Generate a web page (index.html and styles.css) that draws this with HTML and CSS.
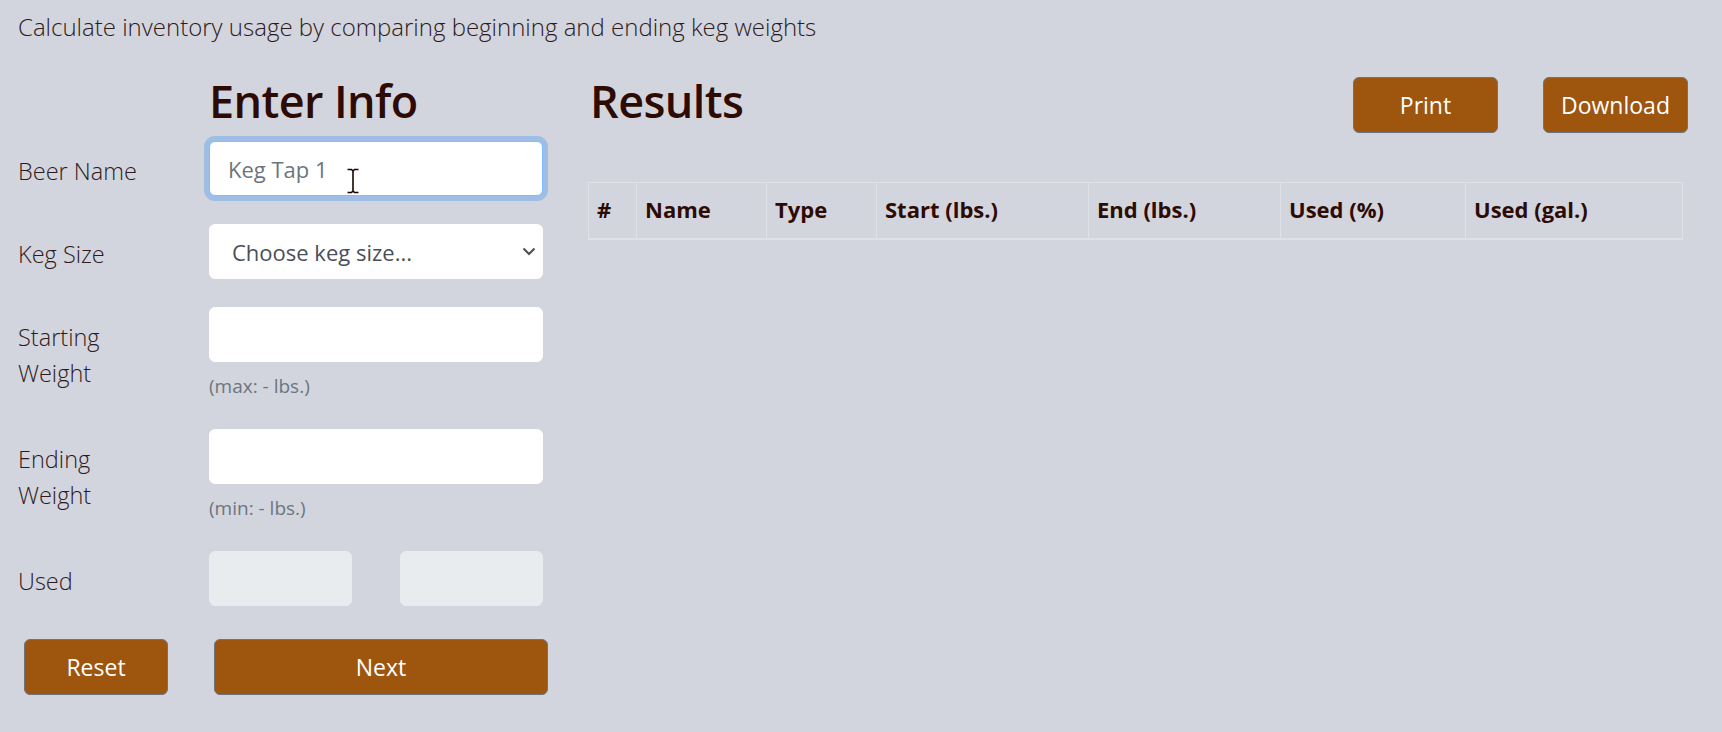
FILE: index.html
```html
<!DOCTYPE html>
<html lang="en">
<head>
<meta charset="utf-8">
<title>Keg Inventory Calculator</title>
<link rel="stylesheet" href="styles.css">
</head>
<body>
<div class="page">
  <p class="lead">Calculate inventory usage by comparing beginning and ending keg weights</p>
  <div class="main">
    <section class="entry">
      <div class="form-grid">
        <h2 class="title entry-title">Enter Info</h2>

        <label class="lbl">Beer Name</label>
        <div class="field overlay-host">
          <input class="ctrl focused" type="text" placeholder="Keg Tap 1">
          <svg class="ibeam" width="14" height="26" viewBox="0 0 14 26">
            <path d="M1.5 1.5h4l1.5 1.5 1.5-1.5h4M7 3v20M1.5 24.5h4l1.5-1.5 1.5 1.5h4" fill="none" stroke="#1a0600" stroke-width="1.6"/>
          </svg>
        </div>

        <label class="lbl">Keg Size</label>
        <div class="field overlay-host">
          <select class="ctrl sel"><option>Choose keg size...</option></select>
          <svg class="chev" width="14" height="9" viewBox="0 0 14 9">
            <path d="M1.5 1.5l5.5 5.5 5.5-5.5" fill="none" stroke="#495057" stroke-width="2"/>
          </svg>
        </div>

        <label class="lbl">Starting Weight</label>
        <div class="field">
          <input class="ctrl" type="text">
          <small class="hint">(max: - lbs.)</small>
        </div>

        <label class="lbl">Ending Weight</label>
        <div class="field">
          <input class="ctrl" type="text">
          <small class="hint">(min: - lbs.)</small>
        </div>

        <label class="lbl">Used</label>
        <div class="field used">
          <input class="ctrl" type="text" disabled>
          <input class="ctrl" type="text" disabled>
        </div>
      </div>
      <div class="actions">
        <button class="btn reset">Reset</button>
        <button class="btn next">Next</button>
      </div>
    </section>

    <section class="results">
      <div class="results-head">
        <h2 class="title">Results</h2>
        <div class="tools">
          <button class="btn tool">Print</button>
          <button class="btn tool">Download</button>
        </div>
      </div>
      <table class="grid">
        <thead>
          <tr>
            <th class="c-num">#</th>
            <th class="c-name">Name</th>
            <th class="c-type">Type</th>
            <th class="c-start">Start (lbs.)</th>
            <th class="c-end">End (lbs.)</th>
            <th class="c-pct">Used (%)</th>
            <th class="c-gal">Used (gal.)</th>
          </tr>
        </thead>
        <tbody></tbody>
      </table>
    </section>
  </div>
</div>
</body>
</html>
```

FILE: styles.css
```css
* {
  box-sizing: border-box;
}

html, body {
  margin: 0;
  padding: 0;
}

body {
  background: #d3d5de;
  color: #2e0b02;
  font-family: "Open Sans", "Noto Sans", sans-serif;
  font-size: 23px;
  line-height: 36px;
}

.page {
  padding: 9px 34px 0 18px;
}

.lead {
  margin: 0;
  font-size: 24px;
  font-weight: 300;
  line-height: 36px;
  color: #2e1a1a;
}

.main {
  display: flex;
  margin-top: 27px;
}

.entry {
  width: 531px;
  flex: none;
}

.title {
  margin: 0;
  font-size: 45px;
  font-weight: 600;
  letter-spacing: -0.6px;
  line-height: 58px;
  color: #2e0b02;
}

.form-grid {
  display: grid;
  grid-template-columns: 191px 334px;
  align-items: start;
}

.entry-title {
  grid-column: 2;
  margin-bottom: 11px;
}

.lbl {
  grid-column: 1;
  padding: 12px 58px 0 0;
  font-size: 23.5px;
  font-weight: 300;
  line-height: 36px;
  color: #2e1a1a;
}

.field {
  grid-column: 2;
  margin-bottom: 28px;
  display: flex;
  flex-direction: column;
}

.overlay-host {
  position: relative;
}

.ctrl {
  display: block;
  width: 100%;
  height: 55px;
  margin: 0;
  padding: 0 18px;
  border: 1px solid #ffffff;
  border-radius: 6px;
  background: #ffffff;
  font-family: "Open Sans", "Noto Sans", sans-serif;
  font-size: 22px;
  color: #495057;
  outline: none;
}

.ctrl::placeholder {
  color: #6c757d;
}

.focused {
  border-color: #80bdff;
  box-shadow: 0 0 0 5px rgba(0, 123, 255, 0.25);
}

.sel {
  -webkit-appearance: none;
  appearance: none;
  padding-left: 22px;
}

.ibeam {
  position: absolute;
  left: 137px;
  top: 27px;
}

.chev {
  position: absolute;
  right: 7px;
  top: 23px;
}

.hint {
  margin-top: 10px;
  font-size: 19px;
  line-height: 29px;
  color: #6c757d;
}

.used {
  display: grid;
  grid-template-columns: 1fr 1fr;
  column-gap: 48px;
}

.ctrl:disabled {
  background: #e9ecef;
  border-color: #e9ecef;
}

.actions {
  display: grid;
  grid-template-columns: 190px 334px;
  padding-left: 6px;
  margin-top: 5px;
}

.btn {
  height: 56px;
  padding: 0 18px;
  border: 1px solid #6c7480;
  border-radius: 6px;
  background: #9e550e;
  color: #ffffff;
  font-family: "Open Sans", "Noto Sans", sans-serif;
  font-size: 23px;
  line-height: 36px;
}

.reset {
  width: 144px;
}

.next {
  width: 334px;
}

.results {
  flex: 1;
  margin-left: 39px;
  min-width: 0;
}

.results-head {
  display: flex;
  justify-content: space-between;
  align-items: flex-start;
  margin-bottom: 49px;
  padding-left: 2px;
}

.tools {
  display: flex;
  gap: 45px;
  margin-top: 5px;
}

.tool {
  width: 145px;
  padding: 0;
}

.grid {
  width: 1094px;
  border-collapse: collapse;
  table-layout: fixed;
  border: 1px solid #dee2e6;
}

.grid th {
  height: 56px;
  padding: 0 8px 2px;
  border: 1px solid #dee2e6;
  border-bottom-width: 2px;
  text-align: left;
  font-size: 22px;
  font-weight: 700;
  color: #2e0b02;
  white-space: nowrap;
}

.c-num { width: 48px; }
.c-name { width: 130px; }
.c-type { width: 110px; }
.c-start { width: 212px; }
.c-end { width: 192px; }
.c-pct { width: 185px; }
.c-gal { width: 217px; }
```
